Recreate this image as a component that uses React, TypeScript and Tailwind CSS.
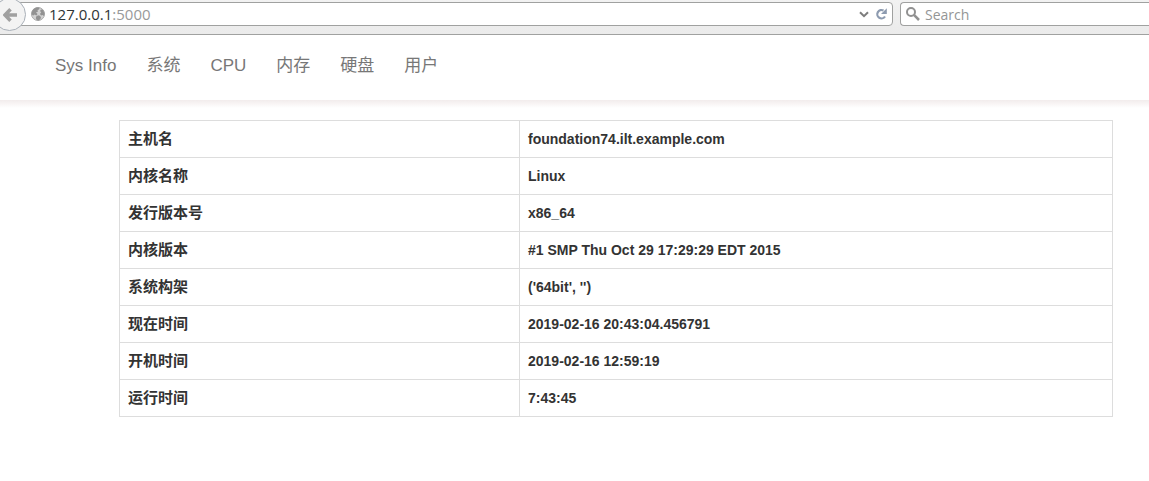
import { useState } from 'react';

const navItems = ['系统', 'CPU', '内存', '硬盘', '用户'];

const rows = [
  { label: '主机名', value: 'foundation74.ilt.example.com' },
  { label: '内核名称', value: 'Linux' },
  { label: '发行版本号', value: 'x86_64' },
  { label: '内核版本', value: '#1 SMP Thu Oct 29 17:29:29 EDT 2015' },
  { label: '系统构架', value: "('64bit', '')" },
  { label: '现在时间', value: '2019-02-16 20:43:04.456791' },
  { label: '开机时间', value: '2019-02-16 12:59:19' },
  { label: '运行时间', value: '7:43:45' },
];

function GlobeIcon() {
  return (
    <svg width="14" height="14" viewBox="0 0 14 14" className="shrink-0" aria-hidden="true">
      <circle cx="7" cy="7" r="6.5" fill="#d2d2d2" stroke="#a6a6a6" />
      <path d="M.8 5 2.500 2 5.500 .6 8.500 .8 8 2.500 6.500 3 7 4.500 5 5.500 6.500 7 5.500 8.500 3.500 7.500 2.500 8.500 .8 7.500zM10 2.500 12 2.800 13.400 6 13 9 11.500 8 10 8.500 9 7 10.200 5.200 9 4zM5.500 9 8 8.200 10 10 9.500 12 7.500 13.400 5.500 12.800 4.800 11z" fill="#929292" />
    </svg>
  );
}

function BrowserBar() {
  const [search, setSearch] = useState('');

  return (
    <header className="flex h-[35px] overflow-hidden border-b border-[#a0a1a0] bg-gradient-to-b from-[#f2f2f2] to-[#ebebeb] pt-[2px] font-['Open_Sans','Noto_Sans',sans-serif] text-sm">
      <button type="button" aria-label="Back" className="relative z-10 -mt-1 -ml-[7px] flex size-[33px] shrink-0 items-center justify-center rounded-full border border-[#a9b0b8] bg-[#f3f3f3]">
        <svg width="14" height="14" viewBox="0 0 14 14" fill="none" stroke="#a0a0a0" strokeWidth="3.5" aria-hidden="true">
          <path d="M7.500 1.200 2 7l5.500 5.800M2.500 7H14" />
        </svg>
      </button>
      <div className="-ml-3 flex h-6 flex-1 items-center rounded-r-sm border border-[#a0a1a0] bg-white pr-[5px] pl-4">
        <GlobeIcon />
        <span className="ml-1 flex-1 pt-px text-[15px] text-[#2e3436]">127.0.0.1<span className="text-[#989a9a]">:5000</span></span>
        <button type="button" aria-label="Show history" className="mr-[6px]">
          <svg width="10" height="7" viewBox="0 0 10 7" fill="none" stroke="#7d7d7d" strokeWidth="2" aria-hidden="true">
            <path d="M1 1.200 5 5.200 9 1.200" />
          </svg>
        </button>
        <button type="button" aria-label="Reload">
          <svg width="12" height="12" viewBox="0 0 12 12" fill="none" aria-hidden="true">
            <path d="M8.500 2.500A4.200 4.200 0 1 0 10 8.500" stroke="#8d9bb0" strokeWidth="2.2" />
            <path d="M11.800 .2V6H6z" fill="#8d9bb0" />
          </svg>
        </button>
      </div>
      <label className="ml-[7px] flex h-6 w-[249px] shrink-0 items-center rounded-l-sm border border-r-0 border-[#a0a1a0] bg-white pl-[5px]">
        <svg width="14" height="14" viewBox="0 0 14 14" className="shrink-0" fill="none" stroke="#919191" aria-hidden="true">
          <circle cx="5" cy="5" r="4" strokeWidth="2" />
          <path d="M8.200 8.200 13 13" strokeWidth="2.500" />
        </svg>
        <input aria-label="Search" placeholder="Search" value={search} onChange={e => setSearch(e.target.value)} className="ml-[5px] w-full pt-px outline-none placeholder:text-[#949696]" />
      </label>
    </header>
  );
}

export default function App() {
  return (
    <div className="min-h-screen bg-white font-['Liberation_Sans','Noto_Sans_CJK_SC',sans-serif] text-[#333]">
      <BrowserBar />
      <nav className="flex h-[65px] items-center gap-[30px] pb-1 pl-[55px] text-[17px] text-[#777]">
        <a href="#">Sys Info</a>
        {navItems.map(item => <a key={item} href="#">{item}</a>)}
      </nav>
      <div className="h-2 bg-gradient-to-b from-[#f2ecec] to-white" />
      <main className="mt-3 mr-9 ml-[119px]">
        <table className="w-full table-fixed border-collapse text-sm font-bold">
          <tbody>
            {rows.map(row => (
              <tr key={row.label} className="h-[37px]">
                <th scope="row" className="w-[400px] border border-[#ddd] px-2 text-left text-[15px]">{row.label}</th>
                <td className="border border-[#ddd] px-2">{row.value}</td>
              </tr>
            ))}
          </tbody>
        </table>
      </main>
    </div>
  );
}
